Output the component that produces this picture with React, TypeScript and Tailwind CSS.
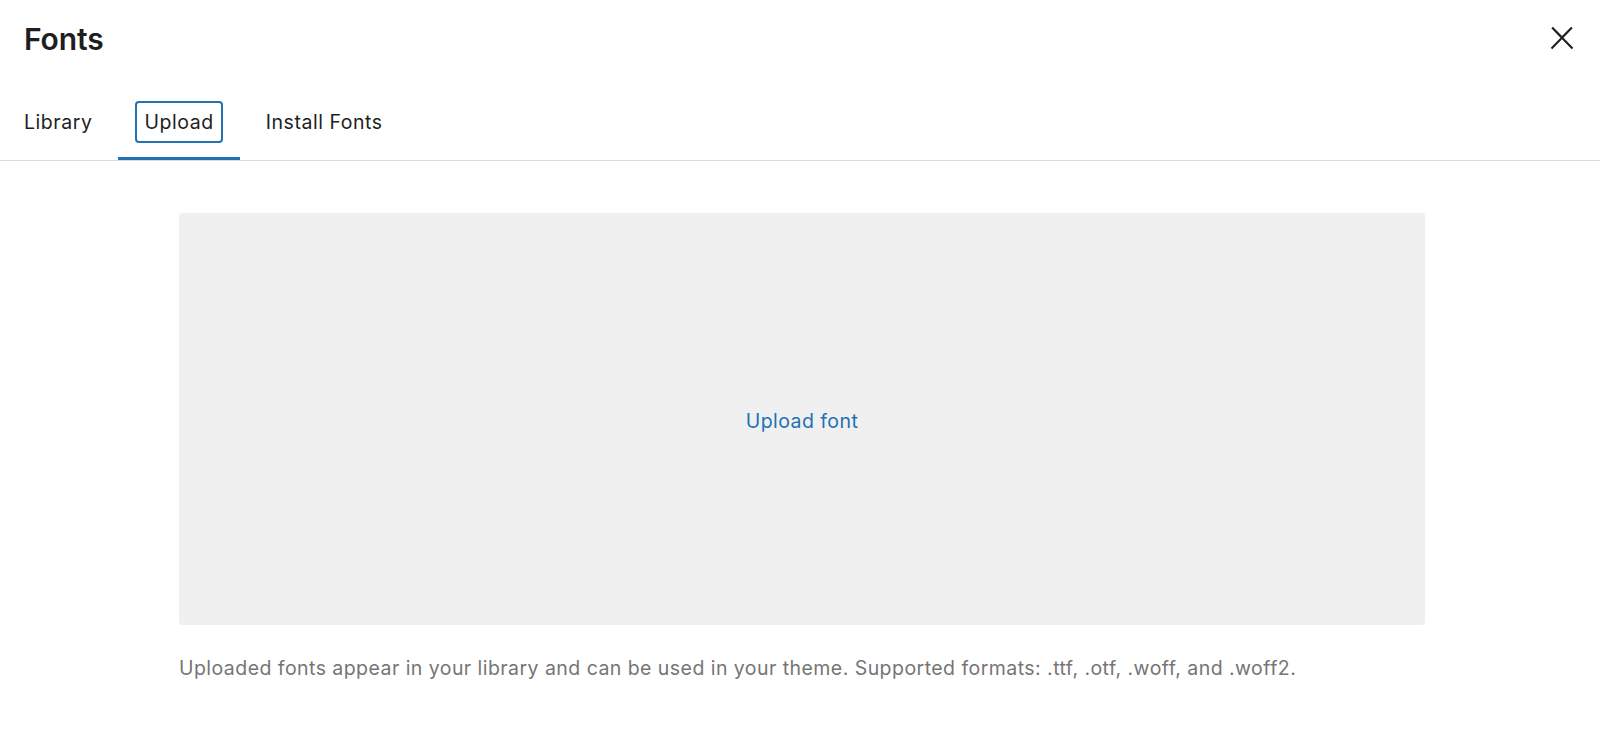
import { useState } from "react";

const tabs = ["Library", "Upload", "Install Fonts"];

const CloseIcon = () => (
    <svg width="36" height="36" viewBox="0 0 24 24" className="fill-[#1e1e1e]">
        <path d="M13 11.8l6.1-6.3-1-1-6.1 6.2-6.1-6.2-1 1 6.1 6.3-6.5 6.7 1 1 6.5-6.6 6.5 6.6 1-1z" />
    </svg>
);

export default function App() {
    const [active, setActive] = useState("Upload");

    return (
        <div className="min-h-[741px] bg-white font-['Inter','Liberation_Sans',sans-serif] text-[#1e1e1e]">
            {/* header */}
            <div className="flex items-start justify-between pt-[21px] pb-[29px] pl-[24px] pr-[20px]">
                <h1 className="text-[30px] leading-[36px] font-semibold tracking-[-0.1px]">
                    Fonts
                </h1>
                <button className="mt-[-1px]" aria-label="Close">
                    <CloseIcon />
                </button>
            </div>

            {/* tabs */}
            <div className="border-b border-[#dcdcdc]">
                <div className="flex -ml-[2px]">
                    {tabs.map((tab) => {
                        const isActive = tab === active;
                        return (
                            <button
                                key={tab}
                                onClick={() => setActive(tab)}
                                className={`flex h-[74px] items-center px-[17px] border-b-[3px] ${
                                    isActive ? "border-[#2271b1]" : "border-transparent"
                                }`}
                            >
                                <span
                                    className={`flex h-[42px] items-center rounded-[4px] border-2 px-[7px] pt-[2px] text-[19.5px] leading-none tracking-[0.55px] ${
                                        isActive ? "border-[#2271b1]" : "border-transparent"
                                    }`}
                                >
                                    {tab}
                                </span>
                            </button>
                        );
                    })}
                </div>
            </div>

            {/* upload area */}
            <div className="mt-[52px] ml-[179px] w-[1246px]">
                <div className="flex h-[412px] items-center justify-center rounded-[3px] bg-[#f0f0f0]">
                    <button className="pt-[3px] text-[19.5px] leading-[28px] tracking-[0.45px] text-[#2271b1]">
                        Upload font
                    </button>
                </div>
            </div>

            <p className="mt-[29px] ml-[179px] text-[19.5px] leading-[28px] tracking-[0.45px] text-[#757575]">
                Uploaded fonts appear in your library and can be used in your theme. Supported formats: .ttf, .otf, .woff, and .woff2.
            </p>
        </div>
    );
}
